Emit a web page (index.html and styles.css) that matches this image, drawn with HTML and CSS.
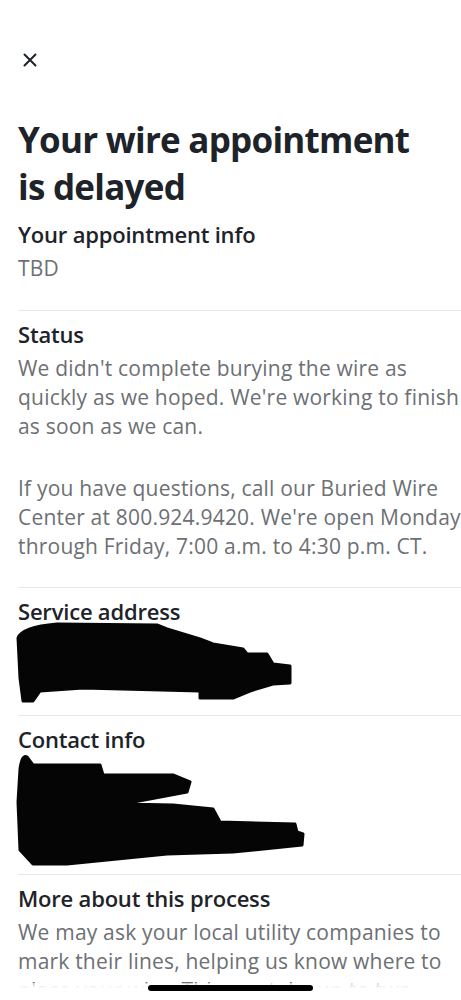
FILE: index.html
```html
<!DOCTYPE html>
<html lang="en">
<head>
    <meta charset="UTF-8">
    <meta name="viewport" content="width=device-width, initial-scale=1.0">
    <title>Your wire appointment is delayed</title>
    <link rel="stylesheet" href="styles.css">
</head>
<body>
    <div class="page">
        <button class="close-btn" aria-label="Close">
            <svg width="14" height="14" viewBox="0 0 14 14">
                <path d="M1.5 1.5 L12.5 12.5 M12.5 1.5 L1.5 12.5" stroke="#1d2329" stroke-width="2" stroke-linecap="round"/>
            </svg>
        </button>

        <h1 class="title">Your wire appointment is delayed</h1>

        <div class="section first">
            <h2>Your appointment info</h2>
            <p>TBD</p>
        </div>

        <div class="section">
            <h2>Status</h2>
            <p>We didn't complete burying the wire as quickly as we hoped. We're working to finish as soon as we can.</p>
            <p class="gap">If you have questions, call our Buried Wire Center at 800.924.9420. We're open Monday through Friday, 7:00 a.m. to 4:30 p.m. CT.</p>
        </div>

        <div class="section">
            <h2>Service address</h2>
            <!-- redacted in the screenshot -->
            <svg class="redacted address" width="300" height="86" viewBox="0 618 300 86">
                <path d="M18 637 Q22 626 57 623 L157 624 L167 628 L200 638 L213 643 L243 648 L247 653 L267 653 L273 663 L290 665 L290 682 L273 683 L250 690 L233 697 L200 697 L200 690 L83 687 L40 690 L33 700 L23 700 L20 677 Z" fill="#050505" stroke="#050505" stroke-width="3" stroke-linejoin="round"/>
            </svg>
        </div>

        <div class="section">
            <h2>Contact info</h2>
            <svg class="redacted contact" width="310" height="116" viewBox="0 750 310 116">
                <path d="M20 767 Q22 752 27 755 L33 763 L100 763 L103 773 L173 773 L190 780 L187 790 L123 802 L173 803 L213 807 L220 820 L295 822 L297 830 L303 832 L302 843 L233 850 L167 852 L67 862 L33 862 L20 848 L18 800 Z" fill="#050505" stroke="#050505" stroke-width="3" stroke-linejoin="round"/>
            </svg>
        </div>

        <div class="section">
            <h2>More about this process</h2>
            <p>We may ask your local utility companies to mark their lines, helping us know where to place your wire. This can take up to two weeks.</p>
        </div>
    </div>
    <div class="home-area">
        <div class="home-bar"></div>
    </div>
</body>
</html>
```

FILE: styles.css
```css
body {
    margin: 0;
    background: #ffffff;
    font-family: "Open Sans", "Liberation Sans", sans-serif;
    color: #1d2329;
    height: 1000px;
    overflow: hidden;
}
.page {
    padding: 46px 0 0 18px;
}
.close-btn {
    width: 28px;
    height: 28px;
    margin-left: -2px;
    padding: 0;
    border: none;
    background: none;
    display: flex;
    align-items: center;
    justify-content: center;
}
.title {
    margin: 42px 0 0;
    padding-right: 30px;
    font-size: 35px;
    line-height: 47px;
    font-weight: 700;
    letter-spacing: -0.75px;
}
.section {
    border-top: 1px solid #e6e7e8;
    padding: 9px 0 26px 0;
}
.section.first {
    border-top: none;
    padding: 10px 0 27px 0;
}
.section h2 {
    margin: 0;
    font-size: 22px;
    line-height: 28px;
    font-weight: 600;
    letter-spacing: -0.2px;
}
.section p {
    margin: 6px -10px 0 0;
    font-size: 21px;
    line-height: 29px;
    letter-spacing: 0.2px;
    color: #6d7074;
}
.section p.gap {
    margin-top: 33px;
}
.redacted {
    display: block;
    margin-left: -18px;
}
.redacted.address {
    margin-top: -6px;
    margin-bottom: -16px;
}
.redacted.contact {
    margin-top: -1px;
    margin-bottom: -20px;
}
.home-area {
    position: fixed;
    left: 0;
    right: 0;
    bottom: 0;
    height: 17px;
    background: linear-gradient(to bottom, rgba(255, 255, 255, 0.6), #ffffff 5px);
}
.home-bar {
    width: 165px;
    height: 6px;
    margin: 2px 0 0 148px;
    border-radius: 3px;
    background: #000000;
}
```
